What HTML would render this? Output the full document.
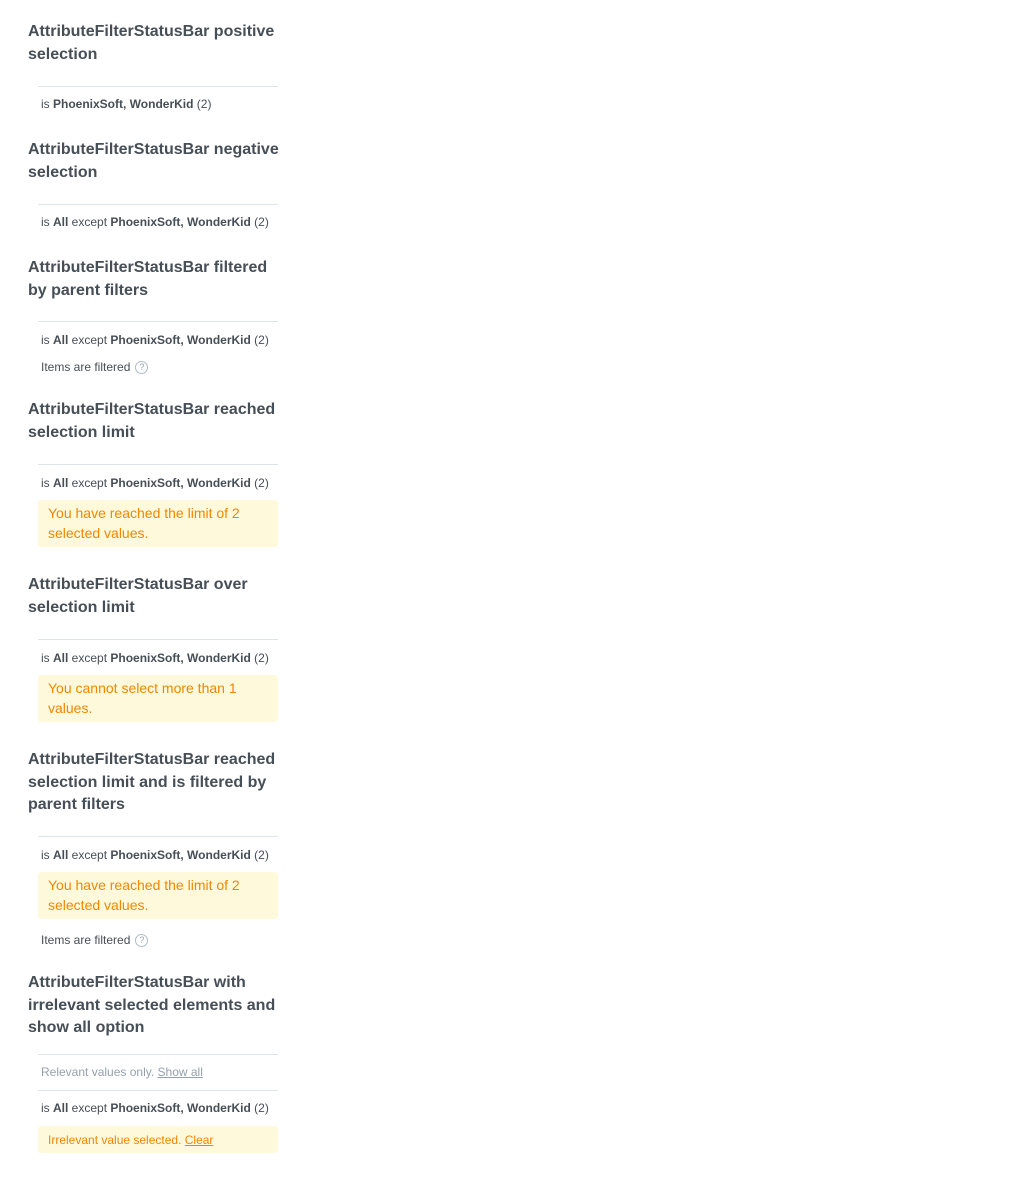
<!DOCTYPE html>
<html><head><meta charset="utf-8"><style>
body{margin:0;width:1024px;height:1184px;background:#fff;font-family:"Liberation Sans",sans-serif;position:relative;}
.h{position:absolute;left:28px;width:260px;font-size:16px;font-weight:bold;line-height:22.5px;color:#464e56;}
.hr{position:absolute;left:38px;width:240px;height:1px;background:#dde4eb;}
.s{position:absolute;left:41px;font-size:12px;line-height:16px;color:#464e56;white-space:nowrap;}
.s b{font-weight:bold;}
.f{position:absolute;left:41px;font-size:12px;line-height:16px;color:#464e56;white-space:nowrap;}
.q{display:inline-block;width:11px;height:11px;border:1px solid #b0bcc6;border-radius:50%;font-size:9px;line-height:11px;text-align:center;color:#94a1ad;margin-left:5px;vertical-align:1px;}
.w{position:absolute;left:38px;width:220px;padding:3px 10px;background:#fff9dc;color:#f18600;font-size:14px;line-height:20px;border-radius:3px;}
.r{position:absolute;left:41px;font-size:12px;line-height:16px;color:#94a1ad;}
.r u{color:#94a1ad;}
</style></head><body>
<div class="h" style="top:21px">AttributeFilterStatusBar positive selection</div>
<div class="hr" style="top:86px"></div>
<div class="s" style="top:96px">is <b>PhoenixSoft, WonderKid</b> (2)</div>

<div class="h" style="top:139px">AttributeFilterStatusBar negative selection</div>
<div class="hr" style="top:204px"></div>
<div class="s" style="top:214px">is <b>All</b> except <b>PhoenixSoft, WonderKid</b> (2)</div>

<div class="h" style="top:257px">AttributeFilterStatusBar filtered by parent filters</div>
<div class="hr" style="top:321px"></div>
<div class="s" style="top:332px">is <b>All</b> except <b>PhoenixSoft, WonderKid</b> (2)</div>
<div class="f" style="top:359px">Items are filtered<span class="q">?</span></div>

<div class="h" style="top:399px">AttributeFilterStatusBar reached selection limit</div>
<div class="hr" style="top:464px"></div>
<div class="s" style="top:475px">is <b>All</b> except <b>PhoenixSoft, WonderKid</b> (2)</div>
<div class="w" style="top:500px;height:41px">You have reached the limit of 2 selected values.</div>

<div class="h" style="top:574px">AttributeFilterStatusBar over selection limit</div>
<div class="hr" style="top:639px"></div>
<div class="s" style="top:650px">is <b>All</b> except <b>PhoenixSoft, WonderKid</b> (2)</div>
<div class="w" style="top:675px;height:41px">You cannot select more than 1 values.</div>

<div class="h" style="top:749px">AttributeFilterStatusBar reached selection limit and is filtered by parent filters</div>
<div class="hr" style="top:836px"></div>
<div class="s" style="top:847px">is <b>All</b> except <b>PhoenixSoft, WonderKid</b> (2)</div>
<div class="w" style="top:872px;height:41px">You have reached the limit of 2 selected values.</div>
<div class="f" style="top:932px">Items are filtered<span class="q">?</span></div>

<div class="h" style="top:972px">AttributeFilterStatusBar with irrelevant selected elements and show all option</div>
<div class="hr" style="top:1054px"></div>
<div class="r" style="top:1064px">Relevant values only. <u>Show all</u></div>
<div class="hr" style="top:1090px"></div>
<div class="s" style="top:1100px">is <b>All</b> except <b>PhoenixSoft, WonderKid</b> (2)</div>
<div class="w" style="top:1126px;height:21px;padding-top:4px;padding-bottom:2px;font-size:12px;line-height:21px">Irrelevant value selected. <u>Clear</u></div>
</body></html>
